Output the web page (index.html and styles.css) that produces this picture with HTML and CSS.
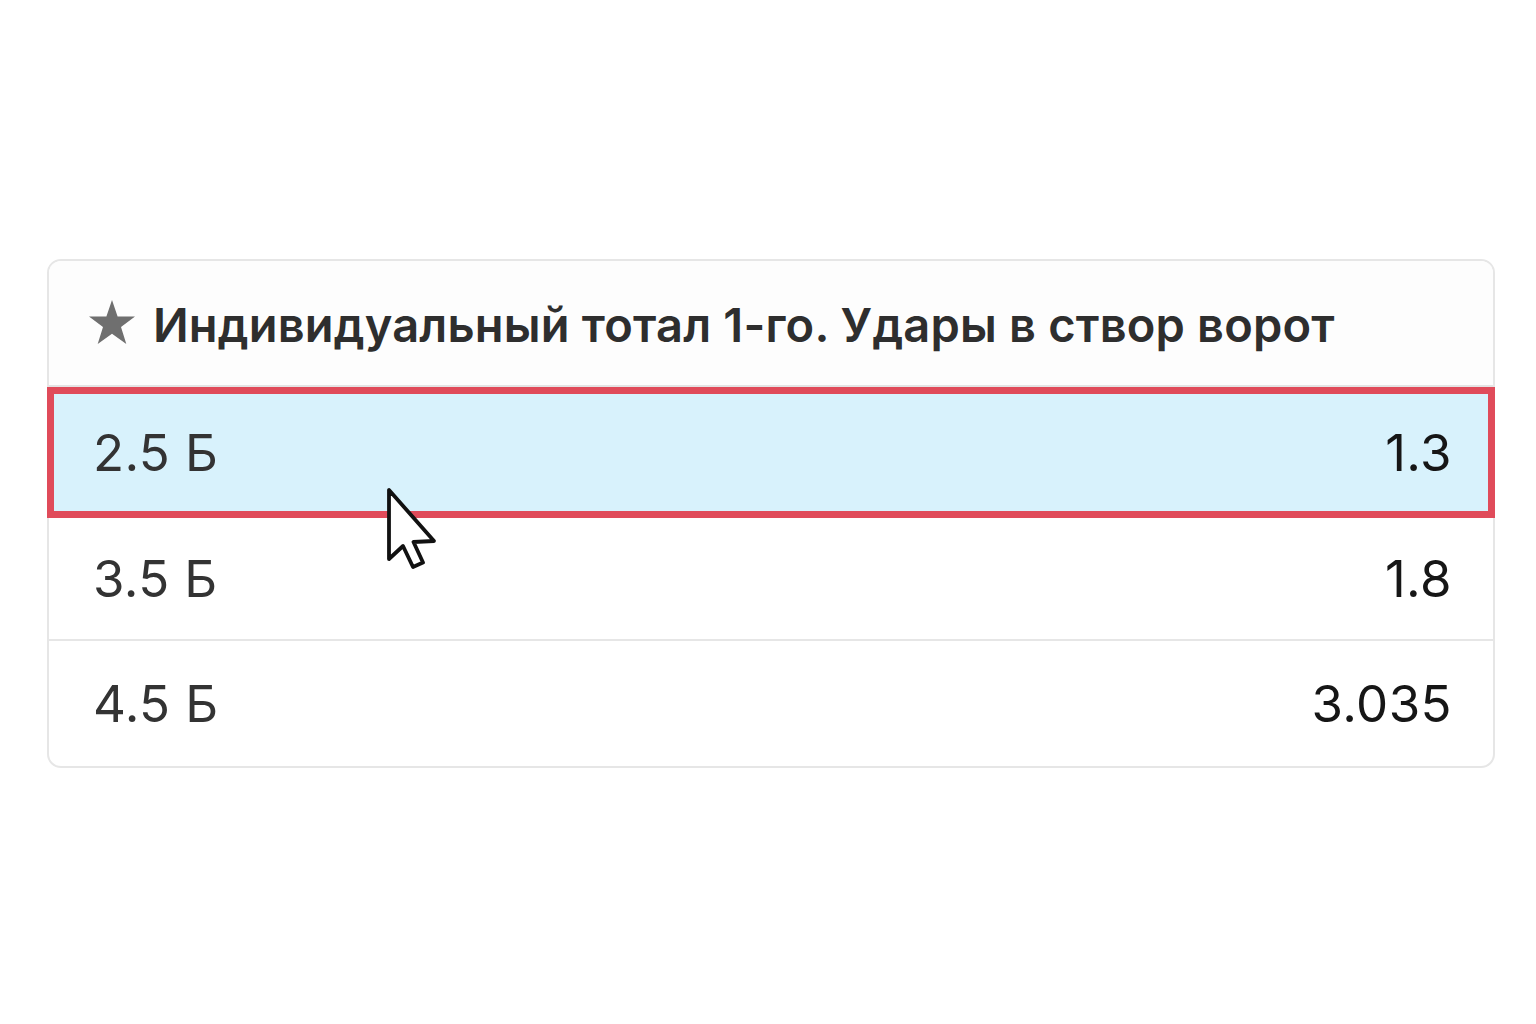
FILE: index.html
```html
<!DOCTYPE html>
<html lang="ru">
<head>
<meta charset="utf-8">
<title>Market</title>
<link rel="stylesheet" href="styles.css">
</head>
<body>
<div class="card">
  <div class="head">
    <svg class="star" viewBox="0 0 48 46" width="48" height="46"><path d="M24 1 L29.6 17.6 L47 17.6 L33 28 L38.3 45 L24 34.7 L9.7 45 L15 28 L1 17.6 L18.4 17.6 Z" fill="#6f6f6f"/></svg>
    <span class="title">Индивидуальный тотал 1-го. Удары в створ ворот</span>
  </div>
  <div class="row active">
    <span class="label">2.5 Б</span><span class="odd">1.3</span>
    <svg class="cursor" viewBox="0 0 54 84" width="54" height="84"><path d="M3 3 L3 72 L17 59 L27 80 L37 75.5 L27.5 55 L48 54 Z" fill="#fff" stroke="#111" stroke-width="3.8" stroke-linejoin="round"/></svg>
  </div>
  <div class="row">
    <span class="label">3.5 Б</span><span class="odd">1.8</span>
  </div>
  <div class="row last">
    <span class="label">4.5 Б</span><span class="odd">3.035</span>
  </div>
</div>
</body>
</html>
```
FILE: styles.css
```css
html, body {
  margin: 0;
  background: #ffffff;
}
body {
  padding: 259px 41px 0 47px;
  font-family: Inter, "Liberation Sans", Arial, sans-serif;
}
.card {
  border: 2px solid #e6e6e6;
  border-radius: 14px;
  background: #fff;
}
.head {
  display: flex;
  align-items: center;
  gap: 17px;
  height: 124px;
  padding-left: 39px;
  background: #fdfdfd;
  border-bottom: 2px solid #e4e4e4;
  border-radius: 12px 12px 0 0;
}
.star {
  margin-top: -2px;
}
.title {
  font-size: 47px;
  font-weight: 600;
  color: #2e2e2e;
  margin-top: 3px;
  letter-spacing: 0.18px;
}
.row {
  position: relative;
  display: flex;
  justify-content: space-between;
  align-items: center;
  height: 121px;
  padding: 0 41px 0 44px;
  font-size: 51px;
  letter-spacing: 0.4px;
  border-bottom: 2px solid #e6e6e6;
}
.row.active {
  margin: 0 -2px;
  height: 117px;
  padding: 0 36px 0 39px;
  background: #d8f2fc;
  border: 7px solid #e04b5a;
}
.row.last {
  border-bottom: none;
  height: 125px;
}
.label {
  color: #333;
}
.odd {
  color: #161616;
}
.cursor {
  position: absolute;
  left: 332px;
  top: 93px;
}
```
